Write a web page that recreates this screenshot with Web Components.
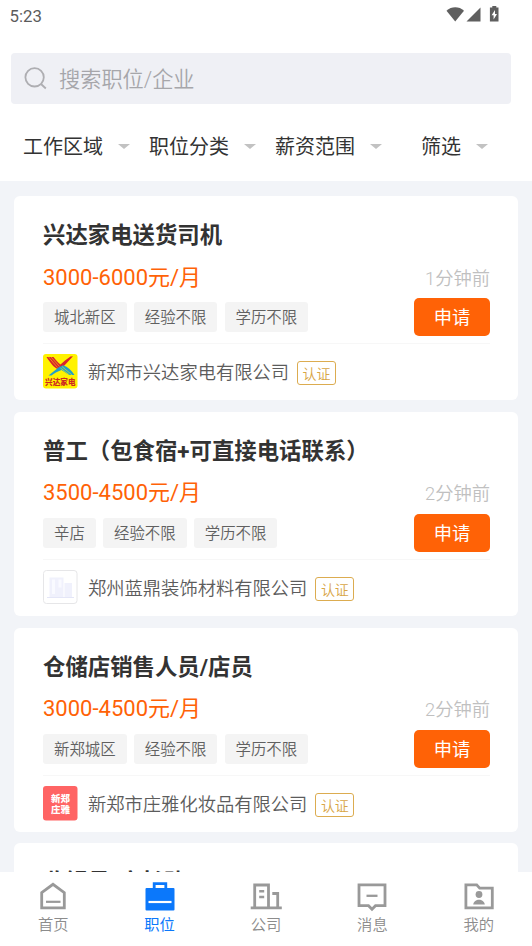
<!DOCTYPE html>
<html lang="zh-CN"><head><meta charset="utf-8"><title>职位</title>
<style>
body{margin:0;width:532px;height:946px;overflow:hidden;background:#f2f4f8;font-family:Roboto,"Noto Sans CJK SC",sans-serif;color:#333}
</style></head><body>
<job-app></job-app>
<script>
const define=(name,html,setup)=>customElements.define(name,class extends HTMLElement{
  connectedCallback(){
    if(this.shadowRoot)return;
    const root=this.attachShadow({mode:'open'});
    root.innerHTML='<style>*{box-sizing:border-box}svg{display:block}</style>'+html;
    if(setup)setup(this,root);
  }
});

define('status-bar',`<style>
:host{display:flex;height:30px;padding:0 32px 0 9.500px;align-items:center;justify-content:space-between;font-size:16.800px;color:#5c5c5c}
span{line-height:30px;padding-top:1px}
</style><span>5:23</span>
<svg width="54" height="18" viewBox="0 0 54 18" fill="#5f5f5f"><path d="M.5 4.800C5.500.2 13 .2 18 4.800L9.200 15.500z"/><path d="M34.500 1.500v14H20.500z"/><path d="M46.300 0h4v1.500h2.200v14h-8.600v-14h2.400z"/><path d="M49 4l-3.400 5.300h2v4.200l3.400-5.500h-2z" fill="#fff"/></svg>`);

define('search-field',`<style>
:host{display:flex;height:51px;margin:23px 21px 0 11px;padding-left:13px;align-items:center;gap:12px;background:#eff0f5;border-radius:4px;font-size:21.200px;font-weight:350;color:#a6a6aa}
span{line-height:51px;padding-top:2px}
</style><svg width="23" height="23" viewBox="0 0 23 23" fill="none" stroke="#aeaeb2" stroke-width="1.800"><circle cx="10.600" cy="10.300" r="9.200"/><path d="M17 17l4.800 4.500"/></svg><span><slot></slot></span>`);

define('filter-item',`<style>
:host{display:flex;align-items:center;gap:15px;font-size:20px;line-height:30px;color:#333;white-space:nowrap}
i{width:0;height:0;margin-top:-1px;border:6px solid transparent;border-top:5.500px solid #c2c2c2;border-bottom:0}
</style><slot></slot><i></i>`);

define('filter-bar',`<style>
:host{display:grid;grid-template-columns:126px 126px 126px 108px;padding:28px 0 0 23px}
filter-item:last-child{padding-left:20px}
</style><filter-item>工作区域</filter-item><filter-item>职位分类</filter-item><filter-item>薪资范围</filter-item><filter-item>筛选</filter-item>`);

define('company-logo',`<style>
:host{display:block;width:35px;height:35px;flex:none}
</style>`,(el,root)=>{
  const art={
    xingda:`<rect width="34.500" height="34.500" rx="3" fill="#fff200"/><path d="M3.500 3H10.500C13 6 15 9 17.500 10.500L22 6.500 27.500 2.500l2.500-.3L20 13l-4.500 2.300C10 13.500 7 8 3.500 3z" fill="#d8242c"/><path d="M8 3l8.500 9.500M5.500 3l9 10.500" stroke="#fff200" stroke-width=".5"/><path d="M5.500 21.500L15.500 13.500l4.500-2.200c5 1.700 8.500 5.200 11.500 9.700h-5.500L18.500 16c-4 1.400-7.500 3.400-10 5.500z" fill="#229eca"/><path d="M19 12.500l10 8.500M17.500 14l9 7" stroke="#fff200" stroke-width=".6"/><text x="17.300" y="30.500" text-anchor="middle" font-size="7.600" font-weight="900" fill="#ce2820">兴达家电</text>`,
    building:`<rect x=".5" y=".5" width="33.500" height="33" rx="3" fill="#fff" stroke="#e6e6e8"/><path d="M6.500 7.500h14V27h-14zM21.500 13H29v14h-7.500z" fill="#f0f1fc"/><path d="M9 9.500h3V24H9zM15.500 9.500h3v8h-3z" fill="#f9faff"/><path d="M4 27.500h27" stroke="#e4e6f7"/>`,
    zhuangya:`<rect width="34.500" height="34.500" rx="3" fill="#ff6464"/><g font-size="9.500" font-weight="900" fill="#fff" text-anchor="middle"><text x="17.500" y="15.700">新郑</text><text x="17.500" y="27">庄雅</text></g>`
  };
  root.innerHTML+='<svg width="35" height="35" viewBox="0 0 35 35">'+(art[el.getAttribute('name')]||'')+'</svg>';
});

define('job-tag',`<style>
:host{display:block;height:30px;padding:0 11px;border-radius:3px;background:#f4f4f4;font-size:15.400px;line-height:30px;color:#606060;font-weight:350;white-space:nowrap}
span{display:block;padding-top:1px}
</style><span><slot></slot></span>`);

define('job-card',`<style>
:host{display:flex;flex-direction:column;height:204.300px;padding:22px 28px 0 29px;background:#fff;border-radius:6px}
h2{margin:0;font-size:22.400px;line-height:34px;font-weight:700;color:#333;white-space:nowrap}
.pay{display:flex;justify-content:space-between;height:46px;align-items:center;margin-top:2px}
.pay b{font-weight:400;font-size:22px;color:#ff6206;padding-bottom:5px}
.pay span{font-size:18.300px;color:#c0c0c0;font-weight:350;padding-bottom:1px}
.row{display:flex;justify-content:space-between;align-items:center;height:38px;margin-top:-2px}
.tags{display:flex;gap:7.200px}
button{width:76px;height:38px;padding:2px 0 0;border:0;border-radius:5px;background:#ff6206;color:#fff;font:inherit;font-size:18.300px;line-height:36px}
.company{display:flex;align-items:center;height:56px;margin-top:7px;border-top:1px solid #f7f7f7}
.company span{margin:-1px 0 0 10px;font-size:18.300px;color:#5c5c5c;font-weight:350;white-space:nowrap}
em{margin:3px 0 0 8px;height:24px;width:39px;border:1px solid #dcac50;border-radius:3px;font-style:normal;font-size:14px;line-height:24px;text-align:center;color:#d8a545;font-weight:350}
</style><h2></h2>`,(el,root)=>{
  const a=n=>el.getAttribute(n);
  root.querySelector('h2').textContent=a('heading');
  if(!a('pay'))return;
  const body=document.createElement('template');
  body.innerHTML=`<div class="pay"><b>${a('pay')}</b><span>${a('time')}</span></div>
<div class="row"><div class="tags">${a('tags').split(',').map(t=>`<job-tag>${t}</job-tag>`).join('')}</div><button>申请</button></div>
<div class="company"><company-logo name="${a('logo')}"></company-logo><span><slot></slot></span><em>认证</em></div>`;
  root.append(body.content);
});

define('nav-item',`<style>
:host{display:flex;flex:1;flex-direction:column;align-items:center;padding-top:9px;color:#999;font-size:15.300px}
:host([active]){color:#0b78fb}
span{line-height:22px;margin-top:1px;font-weight:350;color:#8c8c8c}
:host([active]) span{color:#0b78fb;font-weight:400}
</style><svg width="32" height="32" viewBox="0 0 32 32" fill="none" stroke="currentColor" stroke-width="2.800"></svg><span><slot></slot></span>`,(el,root)=>{
  root.querySelector('svg').innerHTML={
    home:'<path d="M4.700 11.700L16 3.300l11.300 8.400v15.100H4.700z"/><path d="M9 20.800h14.500" stroke-width="2.200"/>',
    jobs:'<path d="M10.200 8V2.700h11.600V8" stroke-width="2.800"/><rect x="1.500" y="7" width="29" height="22.500" rx="1" fill="currentColor" stroke="none"/><path d="M4.500 21h23" stroke="#fff" stroke-width="2.200"/>',
    company:'<path d="M.7 26.800h31.100M4.700 27V4h13.800v23M22.300 12.500h5.400V27"/><path d="M9.200 10.300h5M9.200 16h5" stroke-width="2.400"/>',
    message:'<path d="M3 3.900h26v20.800h-9.500L16 28.200l-3.500-3.500H3z"/><path d="M10.500 14.800h11" stroke-width="2.300"/>',
    mine:'<path d="M2.900 26.800V3.900h10.800l3 3.300H29.300v19.600z"/><circle cx="16" cy="13.500" r="3.400" fill="currentColor" stroke="none"/><path d="M10.200 23.500c.7-6.500 10.900-6.500 11.600 0z" fill="currentColor" stroke="none"/>'
  }[el.getAttribute('icon')];
});

define('bottom-nav',`<style>:host{display:flex;height:74px;background:#fff;flex:none}</style>
<nav-item icon="home">首页</nav-item><nav-item icon="jobs" active>职位</nav-item><nav-item icon="company">公司</nav-item><nav-item icon="message">消息</nav-item><nav-item icon="mine">我的</nav-item>`);

define('job-app',`<style>
:host{display:flex;flex-direction:column;height:946px}
header{height:181px;background:#fff;flex:none}
main{flex:1;min-height:0;overflow:hidden;display:flex;flex-direction:column;gap:11.500px;padding:15px 14px 0}
job-card{flex:none}
</style><header><status-bar></status-bar><search-field>搜索职位/企业</search-field><filter-bar></filter-bar></header>
<main>
<job-card heading="兴达家电送货司机" pay="3000-6000元/月" time="1分钟前" tags="城北新区,经验不限,学历不限" logo="xingda">新郑市兴达家电有限公司</job-card>
<job-card heading="普工（包食宿+可直接电话联系）" pay="3500-4500元/月" time="2分钟前" tags="辛店,经验不限,学历不限" logo="building">郑州蓝鼎装饰材料有限公司</job-card>
<job-card heading="仓储店销售人员/店员" pay="3000-4500元/月" time="2分钟前" tags="新郑城区,经验不限,学历不限" logo="zhuangya">新郑市庄雅化妆品有限公司</job-card>
<job-card heading="收银员/店长助"></job-card>
</main><bottom-nav></bottom-nav>`);
</script></body></html>
